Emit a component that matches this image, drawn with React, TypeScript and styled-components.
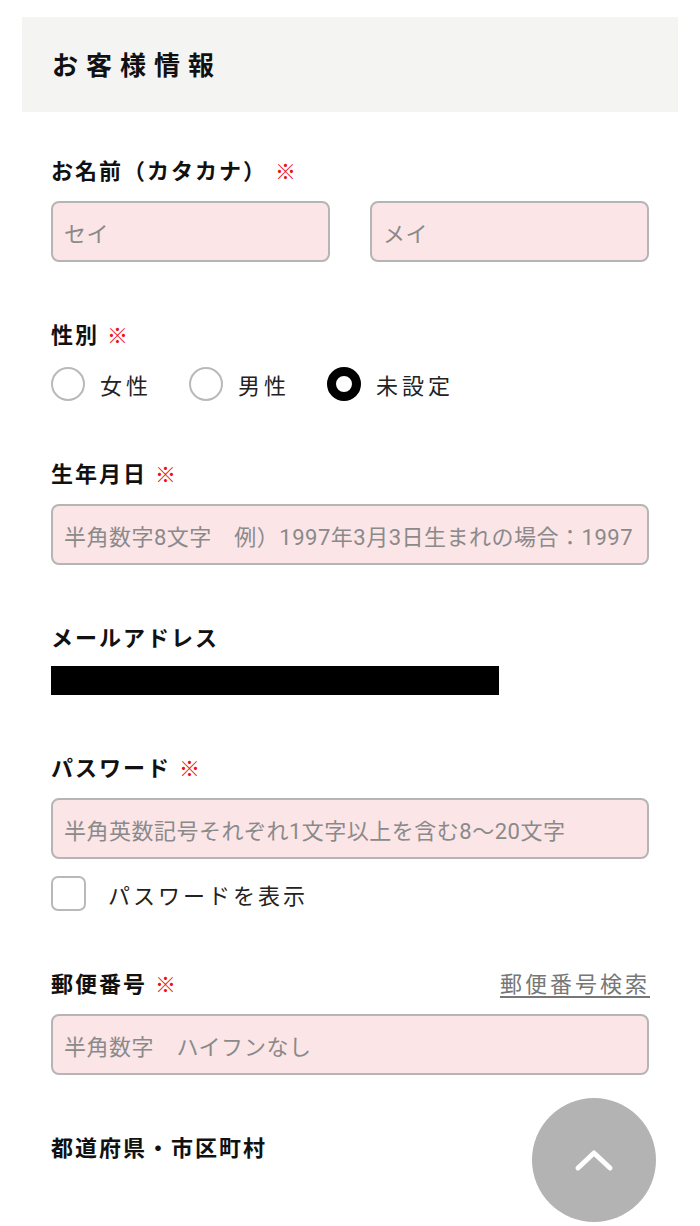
import React, { useState } from 'react'
import styled, { createGlobalStyle } from 'styled-components'

const GlobalStyle = createGlobalStyle`
    html, body {
        margin: 0;
        padding: 0;
        background: #ffffff;
    }
    body {
        font-family: Roboto, "Noto Sans CJK JP", sans-serif;
        color: #111111;
    }
`

const Page = styled.div`
    width: 700px;
    min-height: 1226px;
    padding: 17px 22px 0;
    box-sizing: border-box;
`

const SectionHeader = styled.div`
    height: 95px;
    background: #f4f4f3;
    display: flex;
    align-items: center;
    padding-left: 30px;
`

const SectionTitle = styled.h2`
    margin: 0 0 3px;
    font-family: "Noto Sans CJK JP", sans-serif;
    font-size: 26px;
    font-weight: 700;
    letter-spacing: 8px;
`

const Form = styled.div`
    padding: 43px 29px 0;
    display: flex;
    flex-direction: column;
`

const Field = styled.div<{ $first?: boolean }>`
    display: flex;
    flex-direction: column;
    margin-top: ${({ $first }) => ($first ? '0' : '57px')};
`

const LabelRow = styled.div`
    display: flex;
    align-items: center;
    justify-content: space-between;
    height: 28px;
    margin-bottom: 18px;
`

const Label = styled.label`
    font-family: "Noto Sans CJK JP", sans-serif;
    font-size: 22px;
    font-weight: 700;
    letter-spacing: 2px;
    line-height: 28px;
`

const Required = styled.span`
    color: #ee1111;
    font-weight: 400;
    font-size: 21px;
    margin-left: 8px;
`

const LinkText = styled.a`
    font-family: "Noto Sans CJK JP", sans-serif;
    font-size: 22px;
    color: #777777;
    text-decoration: underline;
    text-underline-offset: 4px;
    letter-spacing: 3px;
    margin-right: -1px;
`

const InputRow = styled.div`
    display: grid;
    grid-template-columns: 1fr 1fr;
    column-gap: 40px;
`

const TextInput = styled.input`
    display: block;
    width: 100%;
    height: 61px;
    box-sizing: border-box;
    border: 2px solid #b5b5b5;
    border-radius: 8px;
    background: #fbe5e7;
    padding: 6px 11px 0;
    font-family: Roboto, "Noto Sans CJK JP", sans-serif;
    font-size: 22px;
    color: #333333;
    outline: none;
    &::placeholder {
        color: #8a8a8a;
        letter-spacing: 0.5px;
    }
`

const RadioGroup = styled.div`
    display: flex;
    align-items: center;
    margin-top: 2px;
`

const RadioOption = styled.label`
    display: flex;
    align-items: center;
    margin-right: 37px;
    cursor: pointer;
`

const RadioCircle = styled.span<{ $checked?: boolean }>`
    width: 34px;
    height: 34px;
    box-sizing: border-box;
    border-radius: 50%;
    border: ${({ $checked }) => ($checked ? '9px solid #000000' : '2px solid #b9b9b9')};
    background: #ffffff;
`

const OptionText = styled.span`
    font-family: "Noto Sans CJK JP", sans-serif;
    font-size: 22px;
    letter-spacing: 4px;
    margin-left: 15px;
    color: #222222;
`

const Masked = styled.div`
    width: 448px;
    height: 29px;
    background: #000000;
    margin-top: -2px;
`

const CheckRow = styled.label`
    display: flex;
    align-items: center;
    margin-top: 17px;
    cursor: pointer;
`

const CheckBox = styled.span`
    width: 35px;
    height: 35px;
    box-sizing: border-box;
    border: 2px solid #b9b9b9;
    border-radius: 7px;
    background: #ffffff;
`

const CheckText = styled.span`
    font-family: "Noto Sans CJK JP", sans-serif;
    font-size: 22px;
    letter-spacing: 3px;
    margin-left: 22px;
    color: #222222;
`

const ScrollTop = styled.button`
    position: fixed;
    right: 44px;
    bottom: 4px;
    width: 124px;
    height: 124px;
    border-radius: 50%;
    border: none;
    background: #b3b3b3;
    display: flex;
    align-items: center;
    justify-content: center;
    padding: 0;
    cursor: pointer;
`

const genders = ['女性', '男性', '未設定']

const App: React.FC = () => {
    const [gender, setGender] = useState('未設定')

    return (
        <Page>
            <GlobalStyle />
            <SectionHeader>
                <SectionTitle>お客様情報</SectionTitle>
            </SectionHeader>
            <Form>
                <Field $first>
                    <LabelRow>
                        <Label>お名前（カタカナ）<Required>※</Required></Label>
                    </LabelRow>
                    <InputRow>
                        <TextInput placeholder="セイ" />
                        <TextInput placeholder="メイ" />
                    </InputRow>
                </Field>

                <Field>
                    <LabelRow>
                        <Label>性別<Required>※</Required></Label>
                    </LabelRow>
                    <RadioGroup>
                        {genders.map((g) => (
                            <RadioOption key={g} onClick={() => setGender(g)}>
                                <RadioCircle $checked={gender === g} />
                                <OptionText>{g}</OptionText>
                            </RadioOption>
                        ))}
                    </RadioGroup>
                </Field>

                <Field>
                    <LabelRow>
                        <Label>生年月日<Required>※</Required></Label>
                    </LabelRow>
                    <TextInput placeholder="半角数字8文字　例）1997年3月3日生まれの場合：1997" />
                </Field>

                <Field>
                    <LabelRow>
                        <Label>メールアドレス</Label>
                    </LabelRow>
                    <Masked />
                </Field>

                <Field>
                    <LabelRow>
                        <Label>パスワード<Required>※</Required></Label>
                    </LabelRow>
                    <TextInput type="password" placeholder="半角英数記号それぞれ1文字以上を含む8〜20文字" />
                    <CheckRow>
                        <CheckBox />
                        <CheckText>パスワードを表示</CheckText>
                    </CheckRow>
                </Field>

                <Field>
                    <LabelRow>
                        <Label>郵便番号<Required>※</Required></Label>
                        <LinkText href="#">郵便番号検索</LinkText>
                    </LabelRow>
                    <TextInput placeholder="半角数字　ハイフンなし" />
                </Field>

                <Field>
                    <LabelRow>
                        <Label>都道府県・市区町村</Label>
                    </LabelRow>
                </Field>
            </Form>
            <ScrollTop aria-label="ページトップへ">
                <svg width="40" height="24" viewBox="0 0 40 24" fill="none">
                    <path d="M4 20 L20 5 L36 20" stroke="#ffffff" strokeWidth="5" strokeLinecap="round" strokeLinejoin="round" />
                </svg>
            </ScrollTop>
        </Page>
    )
}

export default App
